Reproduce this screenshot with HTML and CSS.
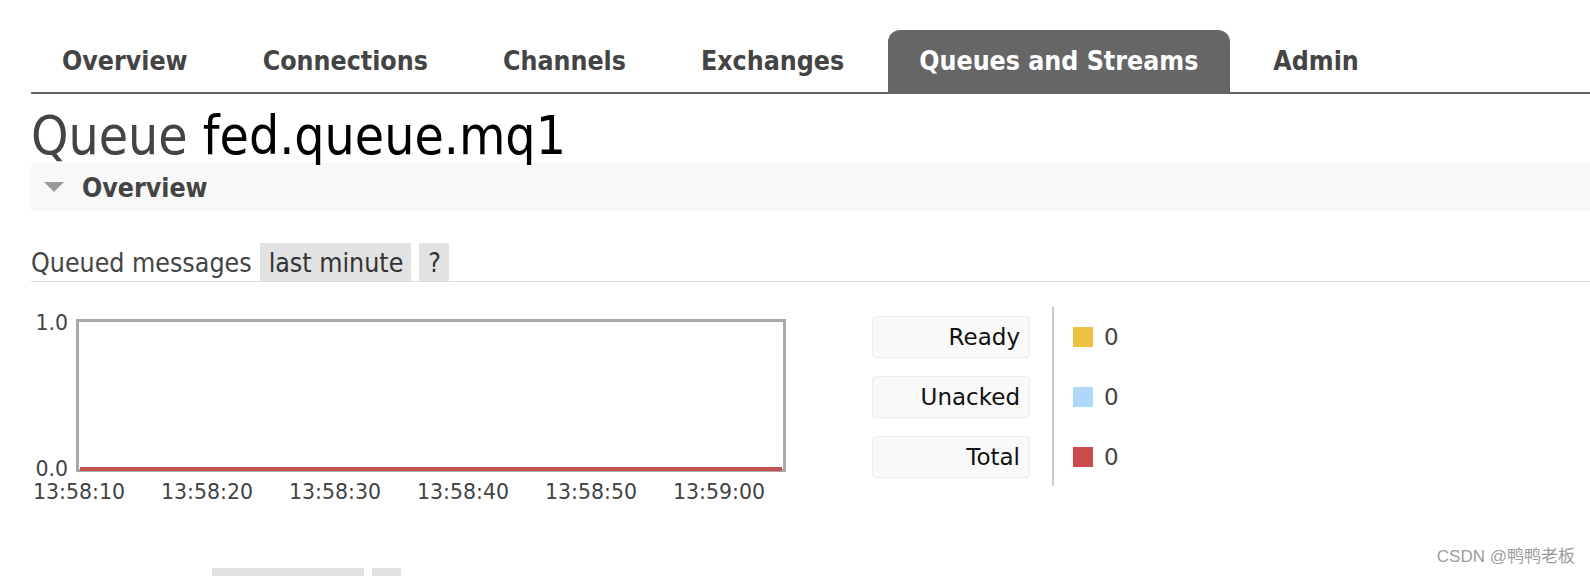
FILE: index.html
```html
<!DOCTYPE html>
<html>
<head>
    <meta charset="UTF-8">
    <title>Queue fed.queue.mq1</title>
    <link rel="stylesheet" href="styles.css">
</head>
<body>
<div class="page">
    <!--顶部导航-->
    <ul class="tabs">
        <li><a href="#">Overview</a></li>
        <li><a href="#">Connections</a></li>
        <li><a href="#">Channels</a></li>
        <li><a href="#">Exchanges</a></li>
        <li class="active"><a href="#">Queues and Streams</a></li>
        <li><a href="#">Admin</a></li>
    </ul>

    <h1 class="title"><span class="kind">Queue</span> fed.queue.mq1</h1>

    <div class="section-head">
        <span class="arrow"></span>
        <span>Overview</span>
    </div>

    <!--队列消息图表-->
    <h3 class="rate-head">
        <span class="rate-name">Queued messages</span>
        <span class="pill">last minute</span>
        <span class="pill">?</span>
    </h3>

    <div class="chart-row">
        <div class="graph">
            <div class="yaxis">
                <span>1.0</span>
                <span>0.0</span>
            </div>
            <div class="plot">
                <div class="series-total"></div>
            </div>
            <div class="xaxis">
                <span>13:58:10</span>
                <span>13:58:20</span>
                <span>13:58:30</span>
                <span>13:58:40</span>
                <span>13:58:50</span>
                <span>13:59:00</span>
            </div>
        </div>

        <div class="legend">
            <div class="legend-labels">
                <div class="lbl">Ready</div>
                <div class="lbl">Unacked</div>
                <div class="lbl">Total</div>
            </div>
            <div class="divider"></div>
            <div class="legend-values">
                <div class="val"><span class="swatch ready"></span>0</div>
                <div class="val"><span class="swatch unacked"></span>0</div>
                <div class="val"><span class="swatch total"></span>0</div>
            </div>
        </div>
    </div>

    <h3 class="rate-head next">
        <span class="rate-name">Message rates</span>
        <span class="pill">last minute</span>
        <span class="pill">?</span>
    </h3>

    <div class="watermark">CSDN @鸭鸭老板</div>
</div>
</body>
</html>
```

FILE: styles.css
```css
* {
    margin: 0;
    padding: 0;
    box-sizing: border-box;
}
ul {
    list-style: none;
}
body {
    font-family: "DejaVu Sans Condensed", "DejaVu Sans", sans-serif;
    color: #444;
    background-color: #fff;
}
.page {
    position: relative;
    height: 576px;
    overflow: hidden;
    padding: 30px 0 0 31px;
}

/* tabs */
.tabs {
    display: flex;
    gap: 12px;
    height: 64px;
    border-bottom: 2px solid #666;
}
.tabs a {
    display: block;
    height: 62px;
    line-height: 62px;
    padding: 0 32px 0 31px;
    font-size: 26.5px;
    font-weight: bold;
    color: #444;
    text-decoration: none;
}
.tabs .active a {
    background-color: #666;
    color: #fff;
    border-radius: 12px 12px 0 0;
}

/* title */
.title {
    padding-top: 14px;
    height: 69px;
    line-height: 56px;
    font-size: 53px;
    font-weight: normal;
    color: #000;
}
.title .kind {
    color: #444;
}

.section-head {
    display: flex;
    align-items: center;
    height: 48px;
    background-color: #f8f8f8;
    font-size: 26.5px;
    font-weight: bold;
    color: #444;
}
.arrow {
    width: 0;
    height: 0;
    margin: 0 18px 0 13px;
    border-left: 10px solid transparent;
    border-right: 10px solid transparent;
    border-top: 10px solid #999;
}

/* rate headers */
.rate-head {
    display: flex;
    height: 39px;
    margin-top: 32px;
    border-bottom: 1px solid #ddd;
    font-size: 26.5px;
    font-weight: normal;
    line-height: 39px;
    color: #444;
}
.rate-head .pill {
    padding: 0 8px 0 9px;
    margin-left: 8px;
    background-color: #e2e2e2;
    color: #333;
}
.rate-head .rate-name {
    margin-right: 0;
}
.rate-head.next {
    margin-top: 65px;
}

/* chart */
.chart-row {
    display: flex;
    align-items: flex-start;
    margin-top: 25px;
}
.graph {
    display: grid;
    grid-template-columns: 45px 710px;
    margin-top: 12px;
    font-family: "DejaVu Sans", sans-serif;
    font-size: 20.5px;
    color: #444;
}
.yaxis {
    display: flex;
    flex-direction: column;
    justify-content: space-between;
    margin: -6px 0 -7px;
    padding-right: 8px;
    text-align: right;
    line-height: 20px;
}
.plot {
    display: flex;
    flex-direction: column;
    justify-content: flex-end;
    height: 153px;
    padding: 0 1px 0 1px;
    border: 3px solid #a9a9a9;
    background-color: #fff;
}
.series-total {
    height: 4px;
    margin-bottom: -2px;
    background-color: #c35353;
}
.xaxis {
    grid-column: 1 / span 2;
    display: flex;
    margin: 9px 0 0 -16px;
    line-height: 22px;
}
.xaxis span {
    width: 128px;
    text-align: center;
}

/* legend */
.legend {
    display: flex;
    margin-left: 86px;
    font-family: "DejaVu Sans", sans-serif;
    font-size: 23px;
}
.legend-labels,
.legend-values {
    display: flex;
    flex-direction: column;
    gap: 18px;
    padding-top: 9px;
}
.lbl {
    width: 158px;
    height: 42px;
    padding-right: 9px;
    line-height: 40px;
    text-align: right;
    color: #111;
    background-color: #f9f9f9;
    border: 1px solid #ececec;
    border-radius: 4px;
}
.divider {
    width: 2px;
    height: 179px;
    margin: 0 19px 0 22px;
    background-color: #ccc;
}
.val {
    display: flex;
    align-items: center;
    height: 42px;
    color: #444;
}
.swatch {
    width: 20px;
    height: 20px;
    margin-right: 11px;
}
.swatch.ready {
    background-color: #edc240;
}
.swatch.unacked {
    background-color: #afd8f8;
}
.swatch.total {
    background-color: #cb4b4b;
}

.watermark {
    position: absolute;
    right: 15px;
    bottom: 9px;
    font-family: "Liberation Sans", "Noto Sans CJK SC", sans-serif;
    font-size: 17px;
    color: #9c9c9c;
}
```
